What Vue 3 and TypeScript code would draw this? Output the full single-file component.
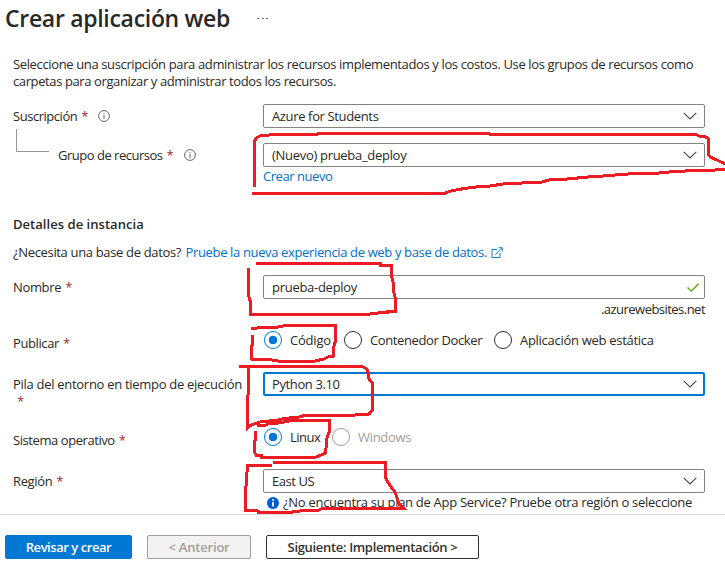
<script setup lang="ts">
const strokes: string[] = [
  'M254.500 187V142L256 138L260 136L269 135L317 134.500L318 133.500H489L490 134.500H696L699 136L706 137L708.500 139V155L712 158L717 160L721 162L726 164',
  'M252 193.500H444L451 191L464 188.500L476 187L490 186L503 184L542 182L549 180L562 179.500L588 177L603 176L628 174L654 173.500L674 171.500L685 171L713 170.500L717 169.500H726',
  'M256 263.500H380V265.500H391V274L393 282L393.500 291L395.500 299V311H387.500V312.500L378 313L366 314.500H250.500V302L248.500 295V268',
  'M252 329.500V328.500L262 327.500L278 327L286 325.500H335.500V341L333.500 348V356L328 357L324 359L313 361.500L281 361.500L272 360L251 359V348L252.500 344V335',
  'M239 366.500H362L367 369L369 379L372.500 383V410L369 414L355 415H306L299 417L284 418.500L278 420L260 422L251 425L247.500 428V400L248.500 390V368',
  'M257 426L266 425L269 423L278 423L292 420.500H329.500V431L327 438L325.500 453L321 455L315 457.500H261V455H256L254.500 452V441L255.500 440V431',
  'M273 462.500H385.500V478L391 487L395 492L399 504L404 508.500H322L319 510H302L299 511.500L286 512.500H258V511L245.500 510.500V492L246.500 480L247.500 465H272',
]
</script>

<template>
  <main class="page">
    <header class="title-bar">
      <h1>Crear aplicación web</h1>
      <span class="more"><i></i><i></i><i></i></span>
    </header>

    <section class="content">
      <p class="intro"><span class="intro-a">Seleccione una suscripción para administrar los recursos implementados y los costos. Use los grupos de recursos como</span><br /><span class="intro-b">carpetas para organizar y administrar todos los recursos.</span></p>

      <div class="row subscription">
        <label><span class="t-sub">Suscripción</span><b>*</b>
          <svg class="info" viewBox="0 0 12 12"><circle cx="6" cy="6" r="5.400" /><path d="M6 5v4M6 3v1" /></svg>
        </label>
        <div class="field"><span class="t-azure">Azure for Students</span><svg class="chevron" viewBox="0 0 14 8"><path d="M.7.8 7 7 13.300.8" /></svg></div>
      </div>
      <div class="row group">
        <label class="nested"><i class="branch"></i><span class="t-group">Grupo de recursos</span><b>*</b>
          <svg class="info" viewBox="0 0 12 12"><circle cx="6" cy="6" r="5.400" /><path d="M6 5v4M6 3v1" /></svg>
        </label>
        <div class="field"><span class="t-new">(Nuevo) prueba_deploy</span><svg class="chevron" viewBox="0 0 14 8"><path d="M.7.8 7 7 13.300.8" /></svg></div>
      </div>
      <a class="create"><span class="t-create">Crear nuevo</span></a>

      <h2><span class="t-details">Detalles de instancia</span></h2>
      <p class="database"><span class="t-need">¿Necesita una base de datos?</span><a><span class="t-try">Pruebe la nueva experiencia de web y base de datos.</span>
        <svg class="external" viewBox="0 0 12 12"><path d="M6 2.500H1v8h8V6M4.500 7.500 11 1M7.500.700H11.300V4.500" /></svg></a></p>

      <div class="row name">
        <label><span class="t-name">Nombre</span><b>*</b></label>
        <div class="field"><span class="t-deploy">prueba-deploy</span><svg class="check" viewBox="0 0 12 9"><path d="m.5 4.500 3.700 3.600L11.600.7" /></svg></div>
      </div>
      <p class="suffix"><span class="t-suffix">.azurewebsites.net</span></p>

      <div class="row radios publish">
        <label><span class="t-pub">Publicar</span><b>*</b></label>
        <div class="options">
          <span class="radio on"></span><span class="option code t-code">Código</span>
          <span class="radio"></span><span class="option docker t-docker">Contenedor Docker</span>
          <span class="radio"></span><span class="option t-static">Aplicación web estática</span>
        </div>
      </div>

      <div class="row runtime">
        <label class="wrapping"><span class="t-runtime">Pila del entorno en tiempo de ejecución</span><br /><b>*</b></label>
        <div class="field focused"><span class="t-python">Python 3.10</span><svg class="chevron" viewBox="0 0 14 8"><path d="M.7.8 7 7 13.300.8" /></svg></div>
      </div>

      <div class="row radios system">
        <label><span class="t-system">Sistema operativo</span><b>*</b></label>
        <div class="options">
          <span class="radio on"></span><span class="option linux t-linux">Linux</span>
          <span class="radio off"></span><span class="option muted t-windows">Windows</span>
        </div>
      </div>

      <div class="row region">
        <label><span class="t-region">Región</span><b>*</b></label>
        <div class="field"><span class="t-east">East US</span><svg class="chevron" viewBox="0 0 14 8"><path d="M.7.8 7 7 13.300.8" /></svg></div>
      </div>
      <p class="hint">
        <svg viewBox="0 0 12 12"><circle cx="6" cy="6" r="6" /><path d="M6 5v4.500M6 2.300v1.800" /></svg>
        <span class="t-hint">¿No encuentra su plan de App Service? Pruebe otra región o seleccione</span>
      </p>
    </section>

    <footer>
      <button class="primary"><span class="t-review">Revisar y crear</span></button>
      <button class="previous" disabled><span class="t-prev">&lt; Anterior</span></button>
      <button class="next"><span class="t-next">Siguiente: Implementación &gt;</span></button>
    </footer>

    <svg class="ink" viewBox="0 0 725 561"><path v-for="d in strokes" :key="d" :d="d" /></svg>
  </main>
</template>

<style>
body { margin: 0; background: #fff; }
</style>

<style scoped>
* { box-sizing: border-box; }
.page { position: relative; width: 725px; height: 561px; overflow: hidden; display: flex; flex-direction: column; font: 13px/17px "Open Sans", "Noto Sans", sans-serif; letter-spacing: -0.200px; color: #292827; white-space: nowrap; }
h1, h2, p { margin: 0; }
.title-bar { height: 56px; padding: 2px 0 0 5px; display: flex; align-items: flex-start; }
h1 { width: 252px; font-size: 23px; line-height: 32px; font-weight: 600; letter-spacing: -0.300px; }
.more { display: flex; gap: 2.500px; padding-top: 15px; }
.more i { width: 2px; height: 1px; margin-top: 1px; background: #666; }
.content { height: 458px; padding-left: 13px; overflow: hidden; }
.intro { height: 48px; }
.row { display: grid; grid-template-columns: 250px 442px; height: 24px; }
label { display: flex; align-items: center; height: 24px; }
label b { margin-left: 4px; color: #a4262c; font-weight: 400; }
.info { width: 12px; height: 12px; margin-left: 10px; fill: none; stroke: #666; stroke-width: 1; }
.field { height: 24px; border: 1px solid #858381; border-radius: 2px; display: flex; align-items: center; justify-content: space-between; padding: 0 8px; background: #fff; }
.chevron { width: 14px; height: 8px; margin-right: -0.500px; fill: none; stroke: #484644; stroke-width: 1.100; }
.focused { border: 2px solid #0078d4; padding: 0 7px; }
.group { margin-top: 15px; }
.branch { width: 33px; height: 23px; margin: -29px 9px 0 3px; border-left: 1px solid #979593; border-bottom: 1px solid #979593; }
a { color: #006fc8; }
.create { display: block; padding: 1px 0 0 250px; }
h2 { font-size: 13px; line-height: 18px; font-weight: 600; margin-top: 30px; }
.database { height: 17px; margin-top: 11px; display: flex; }
.database a { display: flex; align-items: center; margin-left: 4.500px; }
.external { width: 12px; height: 12px; margin-left: 4px; fill: none; stroke: #1782d5; stroke-width: 1; }
.name { margin-top: 14px; }
.check { width: 12px; height: 9px; margin-right: -3px; fill: none; stroke: #57a300; stroke-width: 1.300; }
.suffix { width: 692px; text-align: right; margin-top: 2px; }
.publish { margin-top: 13px; }
.radios { height: 18px; }
.radios label { height: 24px; }
.options { display: flex; align-items: center; height: 18px; padding-left: 1px; }
.radio { flex: none; width: 18px; height: 18px; border: 1px solid #323130; border-radius: 50%; }
.radio.on { border-color: #0078d4; background: radial-gradient(circle, #0078d4 0 4px, transparent 4.600px); }
.radio.off { border-color: #a19f9d; }
.option { margin-left: 8px; }
.code { width: 54px; }
.docker { width: 124px; }
.linux { width: 42px; }
.muted { color: #a19f9d; }
.runtime { margin-top: 23px; }
.wrapping { display: block; padding-top: 4px; }
.system { margin-top: 32px; }
.region { margin-top: 23px; }
.hint { display: flex; align-items: center; padding-left: 254px; height: 19px; }
.hint svg { width: 12px; height: 12px; margin-right: 4px; fill: #015cda; stroke: #fff; stroke-width: 1.700; }
.hint circle { stroke: none; }
footer { height: 47px; border-top: 1px solid #dcdbda; padding: 20px 5px 0; display: flex; gap: 15px; }
button { height: 24px; padding: 0; border: 1px solid #323130; border-radius: 2px; background: #fff; color: #323130; font: 600 13px/17px "Open Sans", "Noto Sans", sans-serif; letter-spacing: -0.200px; }
.primary { width: 127px; background: #0078d4; border-color: #0078d4; color: #fff; }
.previous { width: 104px; background: #f3f2f1; border-color: #a19f9d; color: #a19f9d; }
.next { width: 213px; }
.ink { position: absolute; inset: 0; width: 725px; height: 561px; fill: none; stroke: #ed1c24; stroke-width: 3; shape-rendering: crispEdges; pointer-events: none; }

.intro-a { letter-spacing: -0.365px; }
.intro-b { letter-spacing: -0.390px; }
.t-sub { letter-spacing: -0.460px; }
.t-group { letter-spacing: -0.490px; }
.t-azure { letter-spacing: -0.360px; }
.t-new { letter-spacing: -0.300px; }
.t-create { letter-spacing: -0.450px; }
.t-details { letter-spacing: 0.040px; }
.t-need { letter-spacing: -0.340px; }
.t-try { letter-spacing: -0.360px; }
.t-name { letter-spacing: -0.350px; }
.t-deploy { letter-spacing: -0.280px; }
.t-suffix { letter-spacing: -0.530px; }
.t-pub { letter-spacing: -0.400px; }
.t-docker { letter-spacing: -0.380px; }
.t-static { letter-spacing: -0.290px; }
.t-runtime { letter-spacing: -0.290px; }
.t-python { letter-spacing: -0.380px; }
.t-system { letter-spacing: -0.430px; }
.t-linux { letter-spacing: -0.500px; }
.t-windows { letter-spacing: -0.300px; }
.t-region { letter-spacing: -0.350px; }
.t-east { letter-spacing: -0.450px; }
.t-hint { letter-spacing: -0.290px; }
.t-review { letter-spacing: -0.450px; }
.t-next { letter-spacing: -0.330px; }
</style>
